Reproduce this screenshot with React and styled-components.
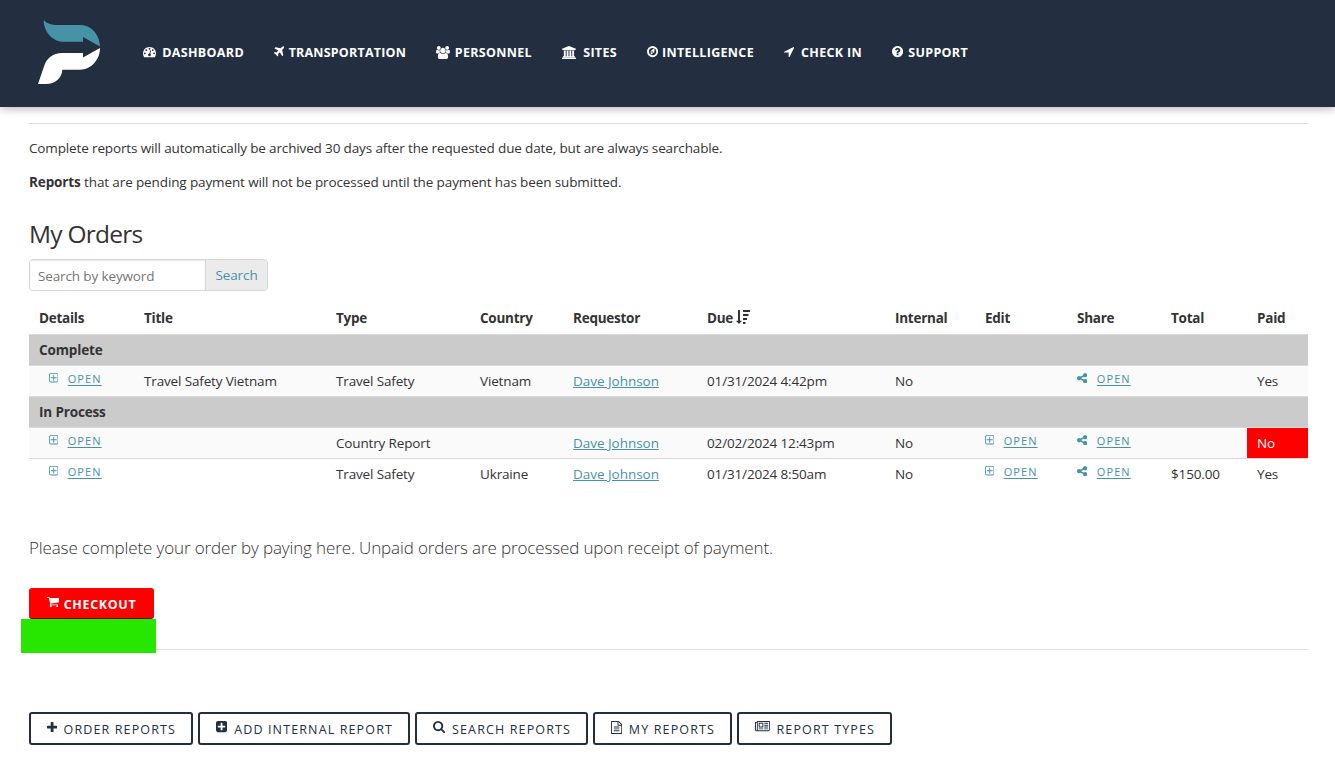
import styled, { createGlobalStyle } from "styled-components";

const GlobalStyle = createGlobalStyle`
  * { box-sizing: border-box; }
  body {
    margin: 0;
    background: #fff;
    color: #333;
    font-family: "Open Sans", "Noto Sans", sans-serif;
    font-size: 13.5px;
    overflow: hidden;
  }
  p, h2 { margin: 0; }
`;

const paths = {
  dashboard: "M384 1152q0-53-37.5-90.5t-90.5-37.5-90.5 37.5-37.5 90.5 37.5 90.5 90.5 37.5 90.5-37.5 37.5-90.5zm192-448q0-53-37.5-90.5t-90.5-37.5-90.5 37.5-37.5 90.5 37.5 90.5 90.5 37.5 90.5-37.5 37.5-90.5zm428 481l101-382q6-26-7.5-48.5t-38.5-29.5-48 6.5-30 39.5l-101 382q-60 5-107 43.5t-63 98.5q-20 77 20 146t117 89 146-20 89-117q16-60-6-117t-72-91zm660-33q0-53-37.5-90.5t-90.5-37.5-90.5 37.5-37.5 90.5 37.5 90.5 90.5 37.5 90.5-37.5 37.5-90.5zm-640-640q0-53-37.5-90.5t-90.5-37.5-90.5 37.5-37.5 90.5 37.5 90.5 90.5 37.5 90.5-37.5 37.5-90.5zm448 192q0-53-37.5-90.5t-90.5-37.5-90.5 37.5-37.5 90.5 37.5 90.5 90.5 37.5 90.5-37.5 37.5-90.5zm320 448q0 261-141 483-19 29-54 29h-1402q-35 0-54-29-141-221-141-483 0-182 71-348t191-286 286-191 348-71 348 71 286 191 191 286 71 348z",
  plane: "M1568 160q44 52 12 148t-108 172l-161 161 160 696q5 19-12 33l-128 96q-7 6-19 6-4 0-7-1-15-3-21-16l-279-508-259 259 53 194q5 17-8 31l-96 96q-9 9-23 9h-2q-15-2-24-13l-189-252-252-189q-11-7-13-23-1-13 9-25l96-97q9-9 23-9 6 0 8 1l194 53 259-259-508-279q-14-8-17-24-2-16 9-27l128-128q14-13 30-8l665 159 160-160q76-76 172-108t148 12z",
  users: "M593 896q-162 5-265 128h-134q-82 0-138-40.5t-56-118.5q0-353 124-353 6 0 43.5 21t97.5 42.5 119 21.5q67 0 133-23-5 37-5 66 0 139 81 256zm1071 637q0 120-73 189.5t-194 69.5h-874q-121 0-194-69.5t-73-189.5q0-53 3.5-103.5t14-109 26.5-108.5 43-97.5 62-81 85.5-53.5 111.5-20q10 0 43 21.5t73 48 107 48 135 21.5 135-21.5 107-48 73-48 43-21.5q61 0 111.5 20t85.5 53.5 62 81 43 97.5 26.5 108.5 14 109 3.5 103.5zm-1024-1277q0 106-75 181t-181 75-181-75-75-181 75-181 181-75 181 75 75 181zm704 384q0 159-112.5 271.5t-271.5 112.5-271.5-112.5-112.5-271.5 112.5-271.5 271.5-112.5 271.5 112.5 112.5 271.5zm576 225q0 78-56 118.5t-138 40.5h-134q-103-123-265-128 81-117 81-256 0-29-5-66 66 23 133 23 59 0 119-21.5t97.5-42.5 43.5-21q124 0 124 353zm-128-609q0 106-75 181t-181 75-181-75-75-181 75-181 181-75 181 75 75 181z",
  bank: "M960 0l960 384v128h-128q0 26-20.5 45t-48.5 19h-1526q-28 0-48.5-19t-20.5-45h-128v-128zm-704 640h256v768h128v-768h256v768h128v-768h256v768h128v-768h256v768h59q28 0 48.5 19t20.5 45v64h-1664v-64q0-26 20.5-45t48.5-19h59v-768zm1595 960q28 0 48.5 19t20.5 45v128h-1920v-128q0-26 20.5-45t48.5-19h1782z",
  compass: "M768 1085l256-128-256-128v256zm384-669v542l-512 418v-542zm248 480a504 504 0 1 0-1008 0 504 504 0 1 0 1008 0zm264 0a768 768 0 1 1-1536 0 768 768 0 1 1 1536 0z",
  arrow: "M1593 349l-640 1280q-17 35-57 35-5 0-15-2-22-5-35.5-22.5t-13.5-39.5v-576h-576q-22 0-39.5-13.5t-22.5-35.5 4-42 29-30l1280-640q13-7 29-7 27 0 45 19 15 14 18.5 34.5t-6.5 39.5z",
  question: "M1024 1376v-192q0-14-9-23t-23-9h-192q-14 0-23 9t-9 23v192q0 14 9 23t23 9h192q14 0 23-9t9-23zm256-672q0-88-55.5-163t-138.5-116-170-41q-243 0-371 213-15 24 8 42l132 100q7 6 19 6 16 0 25-12 53-68 86-92 34-24 86-24 48 0 85.5 26t37.5 59q0 38-20 61t-68 45q-63 28-115.5 86.5t-52.5 125.5v36q0 14 9 23t23 9h192q14 0 23-9t9-23q0-19 21.5-49.5t54.5-49.5q32-18 49-28.5t46-35 44.5-48 28-60.5 12.5-81zm384 192q0 209-103 385.5t-279.5 279.5-385.5 103-385.5-103-279.5-279.5-103-385.5 103-385.5 279.5-279.5 385.5-103 385.5 103 279.5 279.5 103 385.5z",
  sort: "M1216 1568v192q0 14-9 23t-23 9h-256q-14 0-23-9t-9-23v-192q0-14 9-23t23-9h256q14 0 23 9t9 23zm-480-160q0 12-10 24l-319 320q-10 9-23 9-12 0-23-9l-320-320q-15-16-7-35 8-20 30-20h192v-1376q0-14 9-23t23-9h192q14 0 23 9t9 23v1376h192q14 0 23 9t9 23zm672-352v192q0 14-9 23t-23 9h-448q-14 0-23-9t-9-23v-192q0-14 9-23t23-9h448q14 0 23 9t9 23zm192-512v192q0 14-9 23t-23 9h-640q-14 0-23-9t-9-23v-192q0-14 9-23t23-9h640q14 0 23 9t9 23zm192-512v192q0 14-9 23t-23 9h-832q-14 0-23-9t-9-23v-192q0-14 9-23t23-9h832q14 0 23 9t9 23z",
  plusBox: "M1344 800v64q0 14-9 23t-23 9h-352v352q0 14-9 23t-23 9h-64q-14 0-23-9t-9-23v-352h-352q-14 0-23-9t-9-23v-64q0-14 9-23t23-9h352v-352q0-14 9-23t23-9h64q14 0 23 9t9 23v352h352q14 0 23 9t9 23zm128 448v-832q0-66-47-113t-113-47h-832q-66 0-113 47t-47 113v832q0 66 47 113t113 47h832q66 0 113-47t47-113zm128-832v832q0 119-84.5 203.5t-203.5 84.5h-832q-119 0-203.5-84.5t-84.5-203.5v-832q0-119 84.5-203.5t203.5-84.5h832q119 0 203.5 84.5t84.5 203.5z",
  share: "M1344 1024q133 0 226.5 93.5t93.5 226.5-93.5 226.5-226.5 93.5-226.5-93.5-93.5-226.5q0-12 2-34l-360-180q-92 86-218 86-133 0-226.5-93.5t-93.5-226.5 93.5-226.5 226.5-93.5q126 0 218 86l360-180q-2-22-2-34 0-133 93.5-226.5t226.5-93.5 226.5 93.5 93.5 226.5-93.5 226.5-226.5 93.5q-126 0-218-86l-360 180q2 22 2 34t-2 34l360 180q92-86 218-86z",
  cart: "M704 1536q0 52-38 90t-90 38-90-38-38-90 38-90 90-38 90 38 38 90zm896 0q0 52-38 90t-90 38-90-38-38-90 38-90 90-38 90 38 38 90zm128-1088v512q0 24-16.5 42.5t-40.5 21.5l-1044 122q13 60 13 70 0 16-24 64h920q26 0 45 19t19 45-19 45-45 19h-1024q-26 0-45-19t-19-45q0-11 8-31.5t16-36 21.5-40 15.5-29.5l-177-823h-204q-26 0-45-19t-19-45 19-45 45-19h256q16 0 28.5 6.5t19.5 15.5 13 24.5 8 26 5.5 29.5 4.5 26h1201q26 0 45 19t19 45z",
  plus: "M1600 736v192q0 40-28 68t-68 28h-416v416q0 40-28 68t-68 28h-192q-40 0-68-28t-28-68v-416h-416q-40 0-68-28t-28-68v-192q0-40 28-68t68-28h416v-416q0-40 28-68t68-28h192q40 0 68 28t28 68v416h416q40 0 68 28t28 68z",
  plusSquare: "M1408 960v-128q0-26-19-45t-45-19h-320v-320q0-26-19-45t-45-19h-128q-26 0-45 19t-19 45v320h-320q-26 0-45 19t-19 45v128q0 26 19 45t45 19h320v320q0 26 19 45t45 19h128q26 0 45-19t19-45v-320h320q26 0 45-19t19-45zm256-544v960q0 119-84.5 203.5t-203.5 84.5h-960q-119 0-203.5-84.5t-84.5-203.5v-960q0-119 84.5-203.5t203.5-84.5h960q119 0 203.5 84.5t84.5 203.5z",
  search: "M1216 832q0-185-131.5-316.5t-316.5-131.5-316.5 131.5-131.5 316.5 131.5 316.5 316.5 131.5 316.5-131.5 131.5-316.5zm512 832q0 52-38 90t-90 38q-54 0-90-38l-343-342q-179 124-399 124-143 0-273.5-55.5t-225-150-150-225-55.5-273.5 55.5-273.5 150-225 225-150 273.5-55.5 273.5 55.5 225 150 150 225 55.5 273.5q0 220-124 399l343 343q37 37 37 90z",
  file: "M1596 380q28 28 48 76t20 88v1152q0 40-28 68t-68 28h-1344q-40 0-68-28t-28-68v-1600q0-40 28-68t68-28h896q40 0 88 20t76 48zm-444-244v376h376q-10-29-22-41l-313-313q-12-12-41-22zm384 1528v-1024h-416q-40 0-68-28t-28-68v-416h-768v1536h1280zm-1024-864q0-14 9-23t23-9h704q14 0 23 9t9 23v64q0 14-9 23t-23 9h-704q-14 0-23-9t-9-23v-64zm736 224q14 0 23 9t9 23v64q0 14-9 23t-23 9h-704q-14 0-23-9t-9-23v-64q0-14 9-23t23-9h704zm0 256q14 0 23 9t9 23v64q0 14-9 23t-23 9h-704q-14 0-23-9t-9-23v-64q0-14 9-23t23-9h704z",
  news: "M1024 512h-384v384h384v-384zm128 640v128h-640v-128h640zm0-768v640h-640v-640h640zm640 768v128h-512v-128h512zm0-256v128h-512v-128h512zm0-256v128h-512v-128h512zm0-256v128h-512v-128h512zm-1536 960v-960h-128v960q0 26 19 45t45 19 45-19 19-45zm1664 0v-1088h-1536v1088q0 33-11 64h1483q26 0 45-19t19-45zm128-1216v1216q0 80-56 136t-136 56h-1664q-80 0-136-56t-56-136v-1088h256v-128h1792z",
};

// [x, y, width, height] of each glyph on its own grid
const boxes = {
  dashboard: [0, 128, 1792, 1536],
  plane: [192, 96, 1408, 1536],
  users: [0, 0, 1920, 1792],
  bank: [0, 0, 1920, 1792],
  compass: [128, 128, 1536, 1536],
  arrow: [192, 256, 1408, 1408],
  question: [128, 128, 1536, 1536],
  sort: [0, 0, 1792, 1792],
  plusBox: [192, 128, 1408, 1408],
  share: [128, 128, 1536, 1536],
  cart: [64, 256, 1664, 1408],
  plus: [192, 128, 1408, 1408],
  plusSquare: [128, 128, 1536, 1536],
  search: [64, 128, 1664, 1664],
  file: [128, 0, 1536, 1792],
  news: [0, 128, 2048, 1536],
};

const Glyph = styled.svg`
  flex: none;
  fill: currentColor;
`;

function Icon({ name, size = 14, className }) {
  let [x, y, w, h] = boxes[name];
  return (
    <Glyph
      className={className}
      viewBox={`${x} ${y} ${w} ${h}`}
      width={(w / 1792) * size}
      height={(h / 1792) * size}
    >
      <path d={paths[name]} />
    </Glyph>
  );
}

const Header = styled.header`
  height: 107px;
  display: flex;
  align-items: flex-start;
  background: #232f40;
  box-shadow: 0 0 10px rgba(0, 0, 0, 0.4);
`;

const Logo = styled.svg`
  margin: 10px 33px 0 30px;
  flex: none;
`;

const Nav = styled.nav`
  display: flex;
  padding-top: 43px;
`;

const NavItem = styled.a`
  display: flex;
  align-items: center;
  justify-content: space-between;
  width: ${props => props.$w}px;
  height: 19px;
  margin-right: 30px;
  color: #fff;
  font-size: 12.5px;
  font-weight: 700;
  letter-spacing: ${props => props.$tight ? 0.2 : 0.33}px;
  white-space: nowrap;
  svg { margin-top: -1px; }
`;

const Page = styled.main`
  margin: 16px 27px 0 29px;
`;

const Rule = styled.hr`
  height: 1px;
  margin: 0;
  border: 0;
  background: #ddd;
`;

const Text = styled.p`
  line-height: 20px;
  margin-top: 14px;
  white-space: nowrap;
  letter-spacing: -0.14px;
  & + & { letter-spacing: -0.12px; }
`;

const Heading = styled.h2`
  margin-top: 25px;
  font-size: 24.5px;
  font-weight: 400;
  line-height: 34px;
  letter-spacing: -0.75px;
`;

const SearchGroup = styled.div`
  display: flex;
  width: 239px;
  height: 32px;
  margin-top: 8px;
  border: 1px solid #d6d6d6;
  border-radius: 4px;
  overflow: hidden;
`;

const SearchInput = styled.input`
  width: 176px;
  border: 0;
  border-right: 1px solid #d6d6d6;
  padding: 2px 8px 0;
  font: inherit;
  letter-spacing: -0.13px;
  box-shadow: inset 0 1px 2px rgba(0, 0, 0, 0.1);
  &::placeholder { color: #757575; }
`;

const SearchButton = styled.button`
  flex: 1;
  border: 0;
  padding: 0;
  background: #ebebeb;
  color: #4693a8;
  font: inherit;
  letter-spacing: -0.1px;
`;

const Table = styled.table`
  width: 1279px;
  margin-top: 12px;
  table-layout: fixed;
  border-collapse: separate;
  border-spacing: 0;
  letter-spacing: -0.15px;
`;

const Th = styled.th`
  height: 31px;
  padding: 0 0 2px 10px;
  text-align: left;
  line-height: 20px;
  white-space: nowrap;
  letter-spacing: -0.25px;
`;

const Td = styled.td`
  height: 31px;
  padding: 0 0 1px 10px;
  border-top: 1px solid #d9d9d9;
  background: ${props => props.$unpaid ? '#f00' : props.$striped ? '#fafafa' : '#fff'};
  color: ${props => props.$unpaid ? '#fff' : '#333'};
  line-height: 20px;
  white-space: nowrap;
`;

const GroupTd = styled.td`
  height: 31px;
  padding: 0 0 0 10px;
  border-top: 1px solid #d9d9d9;
  background: #cbcbcb;
  font-weight: 700;
`;

const SortIcon = styled(Icon)`
  margin-left: 3px;
  vertical-align: -1px;
`;

const Person = styled.a`
  color: #4693a8;
  text-decoration: underline;
  letter-spacing: -0.03px;
`;

const Open = styled.span`
  display: flex;
  align-items: center;
  gap: ${props => props.$gap}px;
  height: 18px;
  margin: -4px 0 0 ${props => props.$indent ? 10 : 0}px;
  color: #4693a8;
  font-size: 11px;
  letter-spacing: 1.1px;
  svg { margin-top: -1px; }
  u { text-underline-offset: 2px; }
`;

const Lead = styled.p`
  margin-top: 45px;
  font-size: 17px;
  font-weight: 300;
  line-height: 28px;
  white-space: nowrap;
  letter-spacing: -0.13px;
`;

const Checkout = styled.button`
  display: flex;
  align-items: center;
  justify-content: center;
  gap: 5px;
  width: 125px;
  height: 31px;
  margin-top: 26px;
  padding: 2px 0 0;
  border: 0;
  border-bottom: 1px solid #6b0a00;
  border-radius: 3px;
  background: #f00;
  color: #fff;
  font: 700 12.5px "Open Sans", sans-serif;
  letter-spacing: 0.65px;
  svg { margin-top: -4px; }
`;

const Notice = styled.div`
  width: 135px;
  height: 34px;
  margin: 0 0 0 -8px;
  background: #27e600;
`;

const BottomRule = styled(Rule)`
  margin: -4px 0 0 127px;
`;

const Actions = styled.div`
  display: flex;
  gap: 5px;
  margin-top: 62px;
`;

const Action = styled.button`
  display: flex;
  align-items: center;
  justify-content: space-between;
  width: ${props => props.$w}px;
  height: 33px;
  padding: 1px 15px 0 16px;
  border: 2px solid #232f40;
  border-radius: 3px;
  background: #fff;
  color: #232f40;
  font: 400 12.5px "Open Sans", sans-serif;
  letter-spacing: 1.13px;
  white-space: nowrap;
  svg { margin: -4px -2px 0 0; }
`;

const nav = [
  { icon: "dashboard", label: "DASHBOARD", w: 101 },
  { icon: "plane", label: "TRANSPORTATION", w: 132, tight: true },
  { icon: "users", label: "PERSONNEL", w: 96 },
  { icon: "bank", label: "SITES", w: 55 },
  { icon: "compass", label: "INTELLIGENCE", w: 107 },
  { icon: "arrow", label: "CHECK IN", w: 78 },
  { icon: "question", label: "SUPPORT", w: 76 },
];

const columns = [
  ["Details", 105], ["Title", 192], ["Type", 144], ["Country", 93],
  ["Requestor", 134], ["Due", 188], ["Internal", 90], ["Edit", 92],
  ["Share", 94], ["Total", 86], ["Paid", 61],
];

const groups = [
  {
    name: "Complete",
    orders: [
      { title: "Travel Safety Vietnam", type: "Travel Safety", country: "Vietnam", due: "01/31/2024 4:42pm", paid: true, striped: true },
    ],
  },
  {
    name: "In Process",
    orders: [
      { type: "Country Report", due: "02/02/2024 12:43pm", edit: true, paid: false, striped: true },
      { type: "Travel Safety", country: "Ukraine", due: "01/31/2024 8:50am", edit: true, total: "$150.00", paid: true },
    ],
  },
];

const actions = [
  { icon: "plus", label: "ORDER REPORTS", w: 164 },
  { icon: "plusSquare", label: "ADD INTERNAL REPORT", w: 212 },
  { icon: "search", label: "SEARCH REPORTS", w: 173 },
  { icon: "file", label: "MY REPORTS", w: 139 },
  { icon: "news", label: "REPORT TYPES", w: 155 },
];

function OpenLink({ icon = "plusBox", indent }) {
  return (
    <Open $indent={indent} $gap={icon == "share" ? 9.5 : 9.3}>
      <Icon name={icon} size={12} />
      <u>OPEN</u>
    </Open>
  );
}

function Order({ order }) {
  let s = order.striped;
  return (
    <tr>
      <Td $striped={s}><OpenLink indent /></Td>
      <Td $striped={s}>{order.title}</Td>
      <Td $striped={s}>{order.type}</Td>
      <Td $striped={s}>{order.country}</Td>
      <Td $striped={s}><Person>Dave Johnson</Person></Td>
      <Td $striped={s}>{order.due}</Td>
      <Td $striped={s}>No</Td>
      <Td $striped={s}>{order.edit && <OpenLink />}</Td>
      <Td $striped={s}><OpenLink icon="share" /></Td>
      <Td $striped={s}>{order.total}</Td>
      <Td $striped={s} $unpaid={!order.paid}>{order.paid ? "Yes" : "No"}</Td>
    </tr>
  );
}

function App() {
  return (
    <>
      <GlobalStyle />
      <Header>
        <Logo width="80" height="85" viewBox="0 0 80 85">
          <path fill="#4693a8" d="M13.7 10C17 14 22 15 28 15H50C61 15 69.5 24 70 36.5L53 27V31.7H32C22 31 13.5 21 13.7 10z" />
          <path fill="#fff" d="M70 38L53 47.5V43H32C23 43 17 48 14.5 55L8 74H16C25 74 32 68 32.3 59.7H50C61 59.5 70 50 70 38z" />
        </Logo>
        <Nav>
          {nav.map((item) => (
            <NavItem key={item.label} $w={item.w} $tight={item.tight}>
              <Icon name={item.icon} size={13} />
              <span>{item.label}</span>
            </NavItem>
          ))}
        </Nav>
      </Header>
      <Page>
        <Rule />
        <Text>Complete reports will automatically be archived 30 days after the requested due date, but are always searchable.</Text>
        <Text><b>Reports</b> that are pending payment will not be processed until the payment has been submitted.</Text>
        <Heading>My Orders</Heading>
        <SearchGroup>
          <SearchInput placeholder="Search by keyword" />
          <SearchButton>Search</SearchButton>
        </SearchGroup>
        <Table>
          <colgroup>
            {columns.map(([name, w]) => <col key={name} width={w} />)}
          </colgroup>
          <thead>
            <tr>
              {columns.map(([name]) => (
                <Th key={name}>{name}{name == "Due" && <SortIcon name="sort" size={14} />}</Th>
              ))}
            </tr>
          </thead>
          <tbody>
            {groups.map((group) => [
              <tr key={group.name}><GroupTd colSpan={11}>{group.name}</GroupTd></tr>,
              ...group.orders.map((order) => <Order key={order.due} order={order} />),
            ])}
          </tbody>
        </Table>
        <Lead>Please complete your order by paying here. Unpaid orders are processed upon receipt of payment.</Lead>
        <Checkout><Icon name="cart" size={13} />CHECKOUT</Checkout>
        <Notice />
        <BottomRule />
        <Actions>
          {actions.map((action) => (
            <Action key={action.label} $w={action.w}>
              <Icon name={action.icon} size={13} />
              {action.label}
            </Action>
          ))}
        </Actions>
      </Page>
    </>
  );
}

export default App;
